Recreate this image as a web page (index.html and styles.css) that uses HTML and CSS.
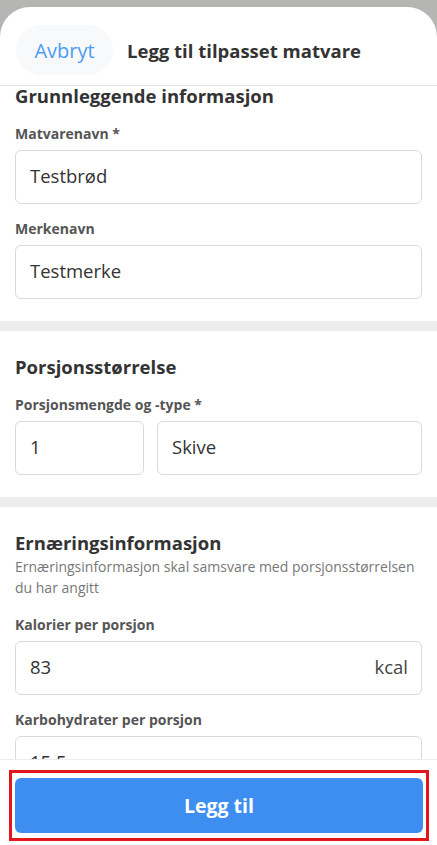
FILE: index.html
```html
<!DOCTYPE html>
<html lang="no">
<head>
    <meta charset="UTF-8">
    <meta name="viewport" content="width=device-width, initial-scale=1.0">
    <title>Legg til tilpasset matvare</title>
    <link rel="stylesheet" href="styles.css">
</head>
<body>

    <div class="sheet">

        <!-- Header -->
        <div class="header">
            <button class="cancel-btn">Avbryt</button>
            <h1 class="title">Legg til tilpasset matvare</h1>
        </div>

        <!-- Scrollable form -->
        <div class="content">
            <div class="scroll-inner">

                <div class="section first">
                    <h2>Grunnleggende informasjon</h2>
                    <label>Matvarenavn *</label>
                    <div class="field"><input type="text" value="Testbrød"></div>
                    <label>Merkenavn</label>
                    <div class="field"><input type="text" value="Testmerke"></div>
                </div>

                <div class="band"></div>

                <div class="section">
                    <h2>Porsjonsstørrelse</h2>
                    <label>Porsjonsmengde og -type *</label>
                    <div class="row">
                        <div class="field amount"><input type="text" value="1"></div>
                        <div class="field unit"><input type="text" value="Skive"></div>
                    </div>
                </div>

                <div class="band"></div>

                <div class="section">
                    <h2>Ernæringsinformasjon</h2>
                    <p class="desc">Ernæringsinformasjon skal samsvare med porsjonsstørrelsen du har angitt</p>
                    <label>Kalorier per porsjon</label>
                    <div class="field"><input type="text" value="83"><span class="suffix">kcal</span></div>
                    <label>Karbohydrater per porsjon</label>
                    <div class="field"><input type="text" value="15,5"><span class="suffix">g</span></div>
                </div>

            </div>
        </div>

        <!-- Footer -->
        <div class="footer">
            <div class="highlight">
                <button class="submit-btn">Legg til</button>
            </div>
        </div>

    </div>

</body>
</html>
```

FILE: styles.css
```css
* { box-sizing: border-box; }

body {
    margin: 0;
    height: 845px;
    overflow: hidden;
    background: #b5b6b4;
    font-family: "Open Sans", Lato, sans-serif;
    color: #333;
}

.sheet {
    margin-top: 7px;
    height: 838px;
    background: #fff;
    border-radius: 30px 30px 0 0;
    display: flex;
    flex-direction: column;
    overflow: hidden;
}

.header {
    display: flex;
    align-items: center;
    gap: 14px;
    padding: 18px 16px 10px;
    border-bottom: 1px solid #e6e6e8;
}
.cancel-btn {
    height: 50px;
    width: 97px;
    padding: 0;
    border: none;
    border-radius: 25px;
    background: #f8f9fb;
    color: #4d9cf2;
    font-family: inherit;
    font-size: 20px;
}
.title {
    margin: 0;
    font-size: 18.5px;
    font-weight: 700;
    color: #333;
}

.content {
    flex: 1;
    overflow: hidden;
}
.scroll-inner { margin-top: -2px; }

.section { padding: 24px 15px 22px; }
.section.first { padding-top: 0; }

h2 {
    margin: 0 0 17px;
    font-size: 18.5px;
    line-height: 24px;
    font-weight: 700;
    color: #333;
}

.desc {
    margin: -16px 0 18px;
    font-size: 14px;
    line-height: 21px;
    color: #777;
}

label {
    display: block;
    margin-bottom: 7px;
    font-size: 14px;
    line-height: 18px;
    font-weight: 700;
    color: #555;
}

.field {
    display: flex;
    align-items: center;
    min-width: 0;
    height: 54px;
    padding: 0 13px 3px 14px;
    border: 1px solid #d9d9de;
    border-radius: 6px;
    background: #fff;
}
.field + label { margin-top: 16px; }
.field input {
    flex: 1;
    width: 100%;
    min-width: 0;
    border: none;
    outline: none;
    padding: 0;
    font-family: inherit;
    font-size: 18.5px;
    color: #333;
    background: transparent;
}
.suffix {
    font-size: 18.5px;
    color: #444;
}

.row {
    display: flex;
    gap: 13px;
}
.field.amount { width: 129px; flex: none; }
.field.unit { flex: 1; }

.band {
    height: 10px;
    background: #ececec;
}

.footer {
    padding: 10px 8px 4px 9px;
    border-top: 1px solid #ececef;
    background: #fff;
}
.highlight {
    border: 3px solid #e3161c;
    padding: 5px 3px;
}
.submit-btn {
    display: block;
    width: 100%;
    height: 55px;
    border: none;
    border-radius: 6px;
    background: #3d8ef0;
    color: #fff;
    font-family: inherit;
    font-size: 19.5px;
    font-weight: 700;
}
```
